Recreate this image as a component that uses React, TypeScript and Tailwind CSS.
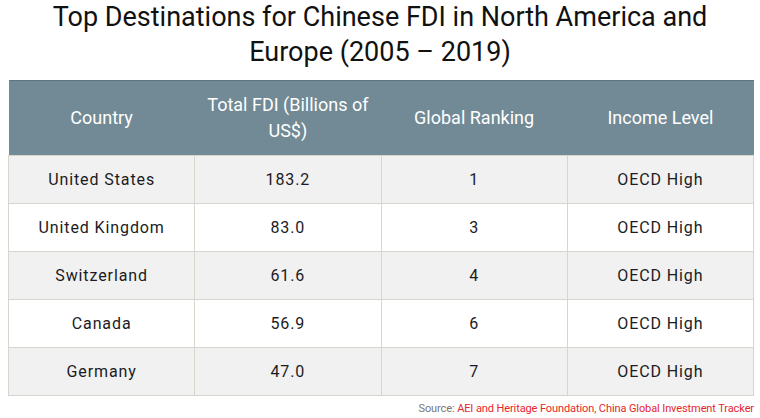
const rows = [
  { country: 'United States', fdi: '183.2', rank: '1', income: 'OECD High' },
  { country: 'United Kingdom', fdi: '83.0', rank: '3', income: 'OECD High' },
  { country: 'Switzerland', fdi: '61.6', rank: '4', income: 'OECD High' },
  { country: 'Canada', fdi: '56.9', rank: '6', income: 'OECD High' },
  { country: 'Germany', fdi: '47.0', rank: '7', income: 'OECD High' },
];

export default function App() {
  return (
    <div className="w-[760px] h-[418px] bg-white overflow-hidden font-['Roboto',sans-serif]">
      {/* Title */}
      <h1 className="pt-[0px] text-center text-[27px] leading-[35px] text-[#111] px-8">
        Top Destinations for Chinese FDI in North America and Europe (2005 – 2019)
      </h1>

      {/* Table */}
      <div className="mx-[8px] mt-[10px] w-[746px]">
        <table className="w-full border-collapse table-fixed">
          <thead>
            <tr className="bg-[#718a96] h-[75px] border-t border-[#5d7581]">
              <th className="w-1/4 px-3 text-[18px] leading-[26px] font-normal text-white">Country</th>
              <th className="w-1/4 px-3 text-[18px] leading-[26px] font-normal text-white">
                Total FDI (Billions of US$)
              </th>
              <th className="w-1/4 px-3 text-[18px] leading-[26px] font-normal text-white">Global Ranking</th>
              <th className="w-1/4 px-3 text-[18px] leading-[26px] font-normal text-white">Income Level</th>
            </tr>
          </thead>
          <tbody>
            {rows.map((r, i) => (
              <tr key={r.country} className={i % 2 === 0 ? 'bg-[#f1f1f1] h-[48px]' : 'bg-white h-[48px]'}>
                <td className="border border-[#d8d4ce] text-center text-[16px] tracking-[0.9px] text-[#1b1b24]">{r.country}</td>
                <td className="border border-[#d8d4ce] text-center text-[16px] tracking-[0.9px] text-[#1b1b24]">{r.fdi}</td>
                <td className="border border-[#d8d4ce] text-center text-[16px] tracking-[0.9px] text-[#1b1b24]">{r.rank}</td>
                <td className="border border-[#d8d4ce] text-center text-[16px] tracking-[0.9px] text-[#1b1b24]">{r.income}</td>
              </tr>
            ))}
          </tbody>
        </table>
        <p className="mt-[6px] text-right text-[11px] leading-[14px] tracking-[-0.1px] text-[#777]">
          Source: <span className="text-[#e5262b]">AEI and Heritage Foundation, China Global Investment Tracker</span>
        </p>
      </div>
    </div>
  );
}
